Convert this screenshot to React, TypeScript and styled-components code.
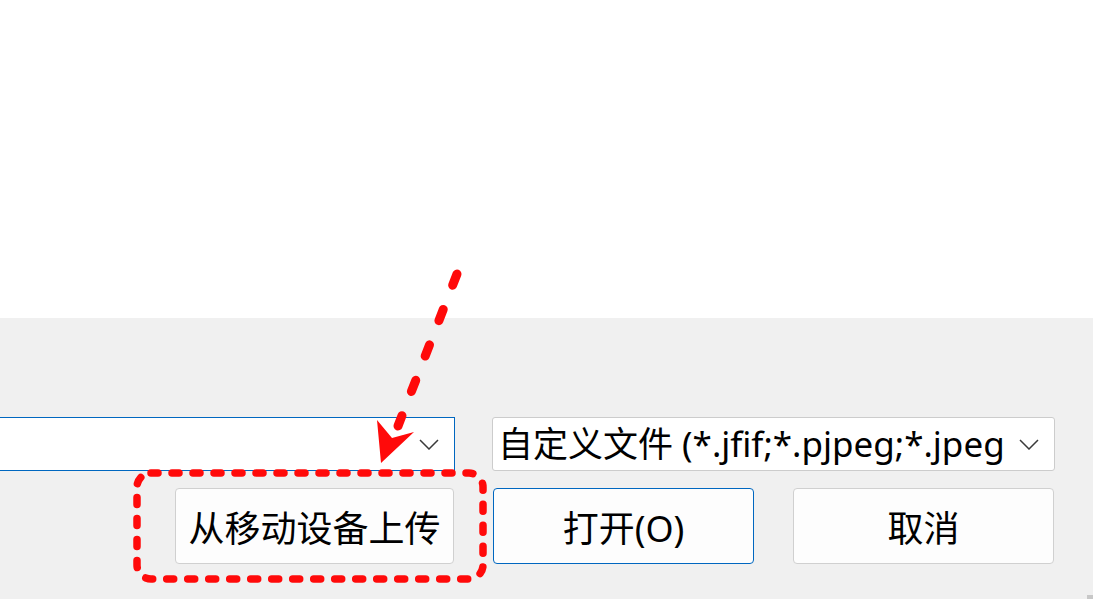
import styled, { createGlobalStyle } from "styled-components"

const GlobalStyle = createGlobalStyle`
  html, body {
    margin: 0;
    padding: 0;
    background: #ffffff;
    overflow: hidden;
  }
`

const Page = styled.div`
  position: relative;
  width: 1093px;
  height: 599px;
  display: flex;
  flex-direction: column;
  font-family: "Noto Sans", "Noto Sans CJK SC", sans-serif;
  color: #000;
  overflow: hidden;
`

const Blank = styled.div`
  height: 318px;
  background: #ffffff;
`

const Footer = styled.div`
  flex: 1;
  background: #f0f0f0;
  padding-top: 99px;
  display: flex;
  flex-direction: column;
  gap: 17px;
`

const Row = styled.div<{ $gap: number; $right: number }>`
  display: flex;
  justify-content: flex-end;
  gap: ${p => p.$gap}px;
  padding-right: ${p => p.$right}px;
`

const Combo = styled.div<{ $width: number; $focused?: boolean; $bleed?: boolean }>`
  box-sizing: border-box;
  width: ${p => p.$width}px;
  height: 54px;
  margin-left: ${p => (p.$bleed ? "-2px" : "0")};
  background: #ffffff;
  border: 1px solid ${p => (p.$focused ? "#0067c0" : "#cccccc")};
  border-radius: ${p => (p.$focused ? "0" : "3px")};
  display: flex;
  align-items: center;
`

const ComboText = styled.div`
  flex: 1;
  min-width: 0;
  overflow: hidden;
  white-space: nowrap;
  padding-left: 5px;
  font-size: 35px;
  line-height: 52px;
`

const Chevron = styled.svg`
  flex: none;
  width: 20px;
  height: 11px;
  margin: 0 15px 0 16px;
`

const Button = styled.button<{ $width: number; $primary?: boolean }>`
  box-sizing: border-box;
  width: ${p => p.$width}px;
  height: 76px;
  background: #fdfdfd;
  border: 1px solid ${p => (p.$primary ? "#0067c0" : "#d0d0d0")};
  border-radius: 4px;
  font-family: inherit;
  font-size: 36px;
  color: #000;
  padding: 0;
  display: flex;
  align-items: center;
  justify-content: center;
`

const Gripper = styled.div`
  position: absolute;
  right: 0;
  bottom: 0;
  width: 6px;
  height: 4px;
  background: #c8c8c8;
`

const Annotation = styled.svg`
  position: absolute;
  left: 0;
  top: 0;
  pointer-events: none;
`

const ChevronIcon = () => (
  <Chevron viewBox="0 0 20 11">
    <path d="M1 1 L10 10 L19 1" fill="none" stroke="#3a3a3a" strokeWidth="1.5" />
  </Chevron>
)

const App = () => {
  return (
    <Page>
      <GlobalStyle />
      <Blank />
      <Footer>
        <Row $gap={37} $right={38}>
          <Combo $width={457} $focused $bleed>
            <ComboText />
            <ChevronIcon />
          </Combo>
          <Combo $width={563}>
            <ComboText>自定义文件 (*.jfif;*.pjpeg;*.jpeg;*.pjp;*.jpg;*.png)</ComboText>
            <ChevronIcon />
          </Combo>
        </Row>
        <Row $gap={39} $right={39}>
          <Button $width={279}>从移动设备上传</Button>
          <Button $width={261} $primary>打开(O)</Button>
          <Button $width={261}>取消</Button>
        </Row>
      </Footer>
      <Gripper />
      <Annotation width="1093" height="599" viewBox="0 0 1093 599">
        <rect
          x="137"
          y="473"
          width="346"
          height="106"
          rx="14"
          fill="none"
          stroke="#ff0a0a"
          strokeWidth="7.5"
          strokeDasharray="7 14"
          strokeLinecap="round"
        />
        <path
          d="M457 274 L398 426"
          fill="none"
          stroke="#ff0a0a"
          strokeWidth="9"
          strokeDasharray="12 26"
          strokeLinecap="round"
        />
        <polygon points="381,463 377,420 392,438 414,432" fill="#ff0a0a" />
      </Annotation>
    </Page>
  )
}

export default App
